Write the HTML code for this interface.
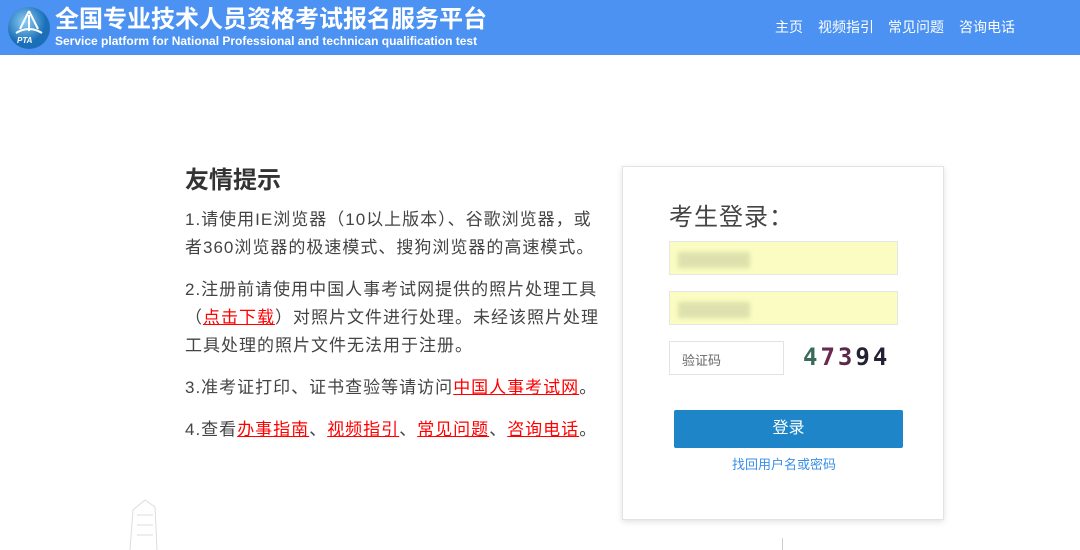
<!DOCTYPE html>
<html><head><meta charset="utf-8"><style>
*{margin:0;padding:0;box-sizing:border-box}
body{width:1080px;height:550px;background:#fff;font-family:"Liberation Sans","Noto Sans CJK SC",sans-serif;position:relative;overflow:hidden}
.hd{position:absolute;left:0;top:0;width:1080px;height:55px;background:#4b92f2}
.t1{position:absolute;left:55px;top:-1px;color:#fff;font-size:24px;font-weight:bold;white-space:nowrap}
.t2{position:absolute;left:55px;top:34px;color:#fff;font-size:12px;font-weight:bold;white-space:nowrap}
.nav{position:absolute;top:17px;color:#fff;font-size:14px}
.tip{position:absolute;left:185px;top:165px;color:#333}
.tip h2{font-size:24px;font-weight:bold;color:#333;line-height:32px;margin-bottom:9px}
.tip p{font-size:17px;line-height:28px;color:#444;margin-bottom:14px;white-space:nowrap;letter-spacing:1px}
.tip a{color:#f00;text-decoration:underline}
.box{position:absolute;left:622px;top:166px;width:322px;height:354px;border:1px solid #e3e3e3;box-shadow:0 2px 6px rgba(0,0,0,.12);background:#fff}
.in{position:absolute;background:#fafcc1;border:1px solid #e6e6e6}
.blur{position:absolute;left:8px;top:10px;width:72px;height:16px;background:#ccd0a0;opacity:.6;filter:blur(2px)}
</style></head><body>
<div class="hd">
<svg style="position:absolute;left:6px;top:5px" width="46" height="46" viewBox="0 0 46 46"><defs><radialGradient id="g" cx="40%" cy="35%"><stop offset="0" stop-color="#8fd0f5"/><stop offset="1" stop-color="#1a6fb8"/></radialGradient></defs><circle cx="23" cy="23" r="21" fill="url(#g)"/><path d="M23 6 L14 24 M23 6 L32 24 M23 10 L23 26 M10 28 Q23 20 36 28" stroke="#fff" stroke-width="2" fill="none"/><text x="11" y="38" font-size="8" font-weight="bold" fill="#fff" font-style="italic" font-family="Liberation Sans">PTA</text></svg>
<div class="t1">全国专业技术人员资格考试报名服务平台</div>
<div class="t2">Service platform for National Professional and technican qualification test</div>
<div class="nav" style="left:775px">主页</div>
<div class="nav" style="left:818px">视频指引</div>
<div class="nav" style="left:888px">常见问题</div>
<div class="nav" style="left:959px">咨询电话</div>
</div>
<div class="tip">
<h2>友情提示</h2>
<p>1.请使用IE浏览器（10以上版本）、谷歌浏览器，或<br>者360浏览器的极速模式、搜狗浏览器的高速模式。</p>
<p>2.注册前请使用中国人事考试网提供的照片处理工具<br>（<a>点击下载</a>）对照片文件进行处理。未经该照片处理<br>工具处理的照片文件无法用于注册。</p>
<p>3.准考证打印、证书查验等请访问<a>中国人事考试网</a>。</p>
<p>4.查看<a>办事指南</a>、<a>视频指引</a>、<a>常见问题</a>、<a>咨询电话</a>。</p>
</div>
<svg style="position:absolute;left:125px;top:495px" width="40" height="55"><path d="M5 55 L8 15 L20 5 L30 12 L32 55 M12 20 L28 20 M12 30 L28 30 M12 40 L28 40" stroke="#ddd" fill="none"/></svg>
<div style="position:absolute;left:782px;top:538px;width:1px;height:12px;background:#ccc"></div>
<div class="box">
<div style="position:absolute;left:46px;top:30px;font-size:24px;color:#444;letter-spacing:1px">考生登录：</div>
<div class="in" style="left:46px;top:74px;width:229px;height:34px"><div class="blur"></div></div>
<div class="in" style="left:46px;top:124px;width:229px;height:34px"><div class="blur"></div></div>
<div style="position:absolute;left:46px;top:174px;width:115px;height:34px;border:1px solid #e3e3e3;font-size:13px;color:#666;padding:8px 12px">验证码</div>
<div style="position:absolute;left:180px;top:176px;font-size:24px;font-weight:bold;letter-spacing:3px;font-family:'DejaVu Sans Mono',monospace"><span style="color:#3a6a5a">4</span><span style="color:#6a2a50">7</span><span style="color:#5a2a4a">3</span><span style="color:#223">9</span><span style="color:#223">4</span></div>
<div style="position:absolute;left:51px;top:243px;width:229px;height:38px;background:#1e86c8;border-radius:2px;color:#fff;font-size:16px;text-align:center;line-height:38px">登录</div>
<div style="position:absolute;left:0;width:322px;top:287px;text-align:center;font-size:13px;color:#3a8ee6">找回用户名或密码</div>
</div>
</body></html>
